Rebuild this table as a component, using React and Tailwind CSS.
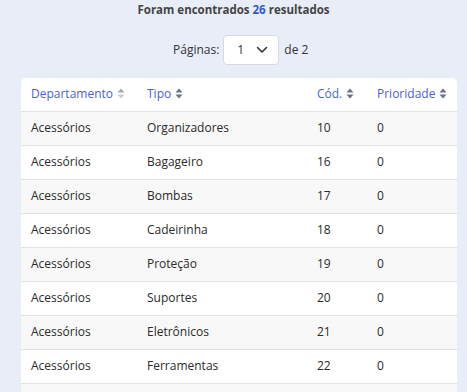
import React from "react";

const rows = [
  ["Acessórios", "Organizadores", "10", "0"],
  ["Acessórios", "Bagageiro", "16", "0"],
  ["Acessórios", "Bombas", "17", "0"],
  ["Acessórios", "Cadeirinha", "18", "0"],
  ["Acessórios", "Proteção", "19", "0"],
  ["Acessórios", "Suportes", "20", "0"],
  ["Acessórios", "Eletrônicos", "21", "0"],
  ["Acessórios", "Ferramentas", "22", "0"],
  ["", "", "", ""],
];

function SortIcon({ light }) {
  return (
    <svg width="8" height="11" viewBox="0 0 8 11" className="inline-block ml-[4px] align-[-1px]">
      <path d="M4 0.5 L7.5 4.5 H0.5 Z" fill={light ? "#a3a8b0" : "#6b7280"} />
      <path d="M4 10.5 L7.5 6.5 H0.5 Z" fill={light ? "#c9ccd1" : "#6b7280"} />
    </svg>
  );
}

export default function App() {
  return (
    <div
      className="w-[467px] h-[392px] overflow-hidden bg-[#e8edf8] text-[#333]"
      style={{ fontFamily: "'Open Sans', 'Liberation Sans', sans-serif" }}
    >
      <div className="pt-[2px] text-center text-[11.5px] font-bold text-[#444] leading-[16px]">
        Foram encontrados <span className="text-[#2f5bd0]">26</span> resultados
      </div>
      <div className="mt-[17px] flex items-center pl-[173px] text-[12px] text-[#333]">
        <span>Páginas:</span>
        <div className="ml-[4px] w-[56px] h-[30px] bg-white border border-[#d6d9de] rounded-[4px] flex items-center pl-[13px]">
          <span>1</span>
          <svg width="12" height="8" viewBox="0 0 12 8" className="ml-[12px]">
            <path d="M1.5 1.5 L6 6 L10.5 1.5" stroke="#333" strokeWidth="1.6" fill="none" strokeLinecap="round" strokeLinejoin="round" />
          </svg>
        </div>
        <span className="ml-[5px]">de 2</span>
      </div>
      <div className="mt-[13px] ml-[21px] w-[436px] bg-white rounded-t-[5px] overflow-hidden">
        <table className="w-full border-collapse text-[12px] table-fixed">
          <colgroup>
            <col className="w-[116px]" />
            <col className="w-[170px]" />
            <col className="w-[60px]" />
            <col className="w-[90px]" />
          </colgroup>
          <thead>
            <tr className="h-[33px] text-[#4a5fd4] text-left">
              <th className="font-normal pl-[10px] border-b border-[#e0e2e6]">
                Departamento<SortIcon light />
              </th>
              <th className="font-normal pl-[10px] border-b border-[#e0e2e6]">
                Tipo<SortIcon />
              </th>
              <th className="font-normal pl-[10px] border-b border-[#e0e2e6]">
                Cód.<SortIcon />
              </th>
              <th className="font-normal pl-[10px] border-b border-[#e0e2e6]">
                Prioridade<SortIcon />
              </th>
            </tr>
          </thead>
          <tbody>
            {rows.map((r, i) => (
              <tr key={i} className={`h-[34px] ${i % 2 === 0 ? "bg-[#f8f8f8]" : "bg-white"}`}>
                {r.map((c, j) => (
                  <td key={j} className="pl-[10px] border-b border-[#e0e2e6] text-[#2a2a2a]">
                    {c}
                  </td>
                ))}
              </tr>
            ))}
          </tbody>
        </table>
      </div>
    </div>
  );
}
